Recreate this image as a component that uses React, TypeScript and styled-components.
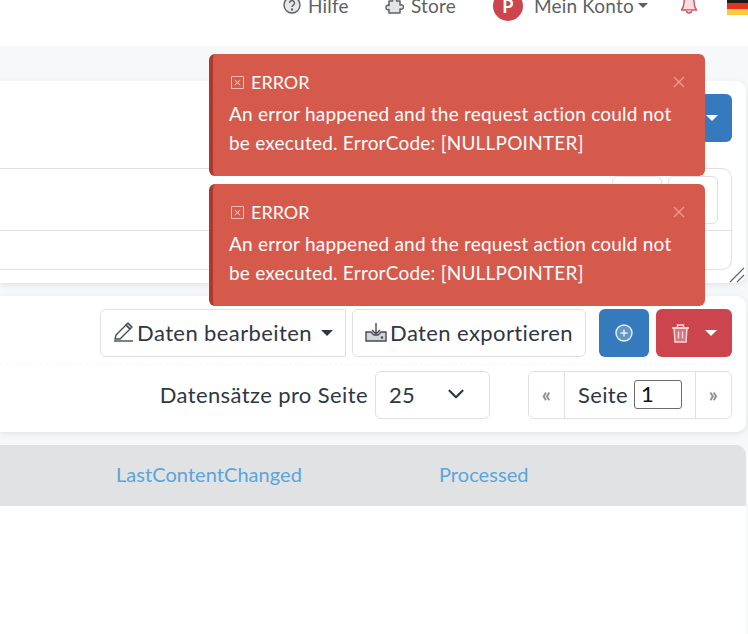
import styled, { createGlobalStyle } from 'styled-components';
import { BsXSquare } from 'react-icons/bs';
import { LuChevronDown } from 'react-icons/lu';

const FONT = '"Lato", "Noto Sans", sans-serif';
const TEXT = '#2f3742';
const BORDER = '#dfe0e4';

const GlobalStyle = createGlobalStyle`
  html, body {
    margin: 0;
    height: 100%;
    overflow: hidden;
    background: #fff;
    font-family: ${FONT};
    color: ${TEXT};
  }
`;

const Page = styled.div`
  width: 748px;
  height: 634px;
  position: relative;
  overflow: hidden;
`;

const TopBar = styled.header`
  height: 46px;
  background: #fff;
  overflow: hidden;
`;

const NavRow = styled.nav`
  display: flex;
  align-items: center;
  height: 30px;
  margin-top: -10px;
  padding-left: 283px;
  font-size: 19px;
  letter-spacing: 0.18px;
  color: #5d6165;
`;

const NavItem = styled.span<{ $width: number; $gap?: number }>`
  display: flex;
  align-items: center;
  gap: ${(p) => p.$gap ?? 7}px;
  width: ${(p) => p.$width}px;
  flex: none;
`;

const Avatar = styled.span`
  width: 30px;
  height: 30px;
  border-radius: 50%;
  background: #cb444e;
  color: #fff;
  font-weight: 700;
  font-size: 18px;
  display: flex;
  align-items: center;
  justify-content: center;
  margin: 2px 4px 0 0;
`;

const Caret = styled.span<{ $color?: string; $size?: number }>`
  display: inline-block;
  border-top: ${(p) => p.$size ?? 6}px solid ${(p) => p.$color || 'currentColor'};
  border-left: ${(p) => p.$size ?? 6}px solid transparent;
  border-right: ${(p) => p.$size ?? 6}px solid transparent;
`;

const NavCaret = styled(Caret)`
  margin-left: -3px;
`;

const Flag = styled.span`
  width: 28px;
  height: 18px;
  margin-top: 2px;
  flex: none;
  background: linear-gradient(#1a1a1a 0 33%, #e2331f 33% 66%, #f9c941 66%);
`;

const Content = styled.main`
  background: #f7f8fa;
  height: 588px;
  padding: 35px 2px 0 0;
  display: flex;
  flex-direction: column;
  gap: 13px;
  box-sizing: border-box;
`;

const Card = styled.section`
  background: #fff;
  border-radius: 0 10px 10px 0;
  box-shadow: 0 2px 6px rgba(40, 50, 70, 0.1);
  padding: 13px 14px 13px 0;
  position: relative;
`;

const FilterHead = styled.div`
  display: flex;
  justify-content: flex-end;
  margin-bottom: 26px;
`;

const SolidButton = styled.button<{ $bg: string; $width: number; $gap?: number }>`
  width: ${(p) => p.$width}px;
  height: 48px;
  border: 0;
  border-radius: 6px;
  background: ${(p) => p.$bg};
  color: #fff;
  display: flex;
  align-items: center;
  justify-content: center;
  gap: ${(p) => p.$gap ?? 0}px;
  padding: 0;
  flex: none;
`;

const BlueHead = styled(SolidButton)`
  justify-content: flex-end;
  padding-right: 14px;
`;

const AddButton = styled(SolidButton)`
  margin-right: 7px;
`;

const FilterTable = styled.div`
  border: 1px solid ${BORDER};
  border-left: 0;
  border-radius: 0 10px 10px 0;
`;

const FilterRow = styled.div`
  height: 61px;
  border-bottom: 1px solid ${BORDER};
  display: flex;
  justify-content: flex-end;
  align-items: center;
  gap: 6px;
  padding-right: 13px;
`;

const EmptyRow = styled.div`
  height: 38px;
`;

const SquareButton = styled.div`
  width: 48px;
  height: 46px;
  border: 1px solid ${BORDER};
  border-radius: 6px;
`;

const ResizeHandle = styled.svg`
  position: absolute;
  right: 0;
  bottom: 0;
`;

const ToolRow = styled.div`
  display: flex;
  justify-content: flex-end;
  align-items: center;
`;

const OutlineButton = styled.button<{ $width: number; $radius?: string; $after: number }>`
  width: ${(p) => p.$width}px;
  height: 48px;
  margin-right: ${(p) => p.$after}px;
  background: #fff;
  border: 1px solid ${BORDER};
  border-radius: ${(p) => p.$radius || '6px'};
  color: ${TEXT};
  font-family: ${FONT};
  font-size: 22px;
  letter-spacing: 0.4px;
  display: flex;
  align-items: center;
  justify-content: center;
  gap: 3px;
  padding: 0 0 2px;
  white-space: nowrap;
`;

const ButtonCaret = styled(Caret)`
  margin: 2px 0 0 6px;
`;

const Divider = styled.div`
  border-top: 1px dashed #f4f5f6;
  margin: 7px 0 6px;
`;

const PagerLabel = styled.span`
  font-size: 22px;
  letter-spacing: 0.4px;
  margin-right: 7px;
  padding-bottom: 2px;
`;

const PageSize = styled.div`
  width: 115px;
  height: 48px;
  box-sizing: border-box;
  border: 1px solid ${BORDER};
  border-radius: 6px;
  display: flex;
  align-items: center;
  justify-content: space-between;
  padding: 0 20px 2px 13px;
  font-size: 22px;
  letter-spacing: 0.35px;
  margin-right: 38px;
`;

const Pager = styled.div`
  display: flex;
  height: 48px;
  box-sizing: border-box;
  border: 1px solid ${BORDER};
  border-radius: 6px;
  font-size: 22px;
  letter-spacing: 0.35px;
`;

const PagerArrow = styled.span`
  width: 35px;
  display: flex;
  align-items: center;
  justify-content: center;
  color: #8a8d91;
  font-size: 20px;
  font-weight: 700;
  padding-bottom: 3px;
  box-sizing: border-box;
`;

const PagerCurrent = styled.span`
  width: 130px;
  border-left: 1px solid ${BORDER};
  border-right: 1px solid ${BORDER};
  display: flex;
  align-items: center;
  justify-content: center;
  gap: 6px;
  padding-bottom: 1px;
  box-sizing: content-box;
`;

const PageInput = styled.span`
  width: 46px;
  height: 27px;
  box-sizing: content-box;
  border: 1px solid #6b6b6b;
  border-radius: 3px;
  line-height: 26px;
  color: #111;
  text-indent: 6px;
`;

const TableHead = styled.div`
  height: 61px;
  background: #e1e2e4;
  border-radius: 0 10px 0 0;
  display: flex;
  align-items: center;
  padding: 0 0 4px 116px;
  box-sizing: border-box;
  font-size: 20px;
  letter-spacing: 0.05px;
  color: #5aa5d9;
`;

const HeadCell = styled.span<{ $width: number }>`
  width: ${(p) => p.$width}px;
`;

const TableBody = styled.div`
  flex: 1;
  margin-top: -13px;
  background: #fff;
`;

const ToastStack = styled.div`
  position: absolute;
  left: 209px;
  top: 54px;
  width: 496px;
  display: flex;
  flex-direction: column;
  gap: 8px;
`;

const Toast = styled.div`
  height: 122px;
  box-sizing: border-box;
  background: #d65a4c;
  border-left: 4px solid #ab3a2c;
  border-radius: 6px;
  color: #fff;
  padding: 15px 16px 0;
  position: relative;
`;

const ToastTitle = styled.div`
  display: flex;
  align-items: center;
  gap: 7px;
  font-size: 18px;
  line-height: 26px;
  margin: 0 0 4px 2px;
`;

const ToastText = styled.div`
  font-size: 19px;
  letter-spacing: 0.22px;
  line-height: 29px;
  margin-top: 3px;
`;

const CloseBox = styled.svg`
  position: absolute;
  right: 20px;
  top: 22px;
`;

const HelpIcon = () => (
  <svg width="18" height="18" viewBox="0 0 18 18" fill="none" stroke="#5d6165" strokeWidth="1.4">
    <circle cx="9" cy="9" r="8" fill="#e6e7e8" />
    <path d="M6.500 7a2.500 2.500 0 1 1 3.800 2.100C9.400 9.700 9 10.200 9 11" />
    <circle cx="9" cy="13.500" r=".5" />
  </svg>
);

const PuzzleIcon = () => (
  <svg width="19" height="19" viewBox="0 0 19 19" fill="#e3e4e5" stroke="#5d6165" strokeWidth="1.5" strokeLinejoin="round">
    <path d="M4 5h3.500C7 2 8 1 9.500 1S12 2 11.500 5H15v4c2.500-.5 3.500.5 3.500 2s-1 2.500-3.500 2v4H4v-3.500C1.500 14 1 13 1 11.500S1.500 9 4 9.500z" />
  </svg>
);

const BellIcon = () => (
  <svg width="18" height="20" viewBox="0 0 18 20" fill="#f8dcdf" stroke="#d2545d" strokeWidth="1.4" strokeLinejoin="round">
    <path d="M9 1.500c-3 0-5 2.500-5 5.500 0 4-1 6-2.500 8h15C15 13 14 11 14 7c0-3-2-5.500-5-5.500z" />
    <path d="M6.500 15.500a2.500 2.500 0 0 0 5 0" />
  </svg>
);

const PencilIcon = () => (
  <svg width="21" height="20" viewBox="0 0 21 20" fill="none" stroke="#444b54" strokeWidth="1.4" strokeLinejoin="round">
    <path d="M2 17l1-4L13 3l4 4L7 17z" />
    <path d="M13 3l2-2 4 4-2 2z" fill="#b9bcc0" />
    <path d="M1 19h19" />
  </svg>
);

const ExportIcon = () => (
  <svg width="22" height="20" viewBox="0 0 22 20" fill="none" stroke="#444b54" strokeWidth="1.4">
    <path d="M1 10h5l3 3h4l3-3h5v9H1z" fill="#d3d5d8" />
    <path d="M11 1v11M7 8l4 4 4-4" />
    <circle cx="17" cy="15.500" r=".6" fill="#444b54" />
  </svg>
);

const PlusCircleIcon = () => (
  <svg width="18" height="18" viewBox="0 0 18 18" fill="none" stroke="#eaf1f8" strokeWidth="1.4">
    <circle cx="9" cy="9" r="8" fill="rgba(255,255,255,.22)" />
    <path d="M9 5.500v7M5.500 9h7" />
  </svg>
);

const TrashIcon = () => (
  <svg width="17" height="19" viewBox="0 0 17 19" fill="none" stroke="#f5dcde" strokeWidth="1.4">
    <path d="M2 4l1 14h11l1-14z" fill="rgba(255,255,255,.25)" />
    <path d="M0 4h17M5.500 4V1h6v3M6.500 7.500v7M10.500 7.500v7" />
  </svg>
);

const ErrorToast = () => (
  <Toast>
    <ToastTitle>
      <BsXSquare size={13} color="#f6dcd9" />
      ERROR
    </ToastTitle>
    <ToastText>
      An error happened and the request action could not be executed. ErrorCode: [NULLPOINTER]
    </ToastText>
    <CloseBox width="12" height="12" viewBox="0 0 12 12" stroke="#ec9d94" strokeWidth="1.2">
      <path d="M1 1l10 10M11 1L1 11" />
    </CloseBox>
  </Toast>
);

const App = () => (
  <Page>
    <GlobalStyle />
    <TopBar>
      <NavRow>
        <NavItem $width={102}><HelpIcon />Hilfe</NavItem>
        <NavItem $width={108}><PuzzleIcon />Store</NavItem>
        <NavItem $width={187}><Avatar>P</Avatar>Mein Konto<NavCaret $size={5} /></NavItem>
        <NavItem $width={47}><BellIcon /></NavItem>
        <Flag />
      </NavRow>
    </TopBar>
    <Content>
      <Card>
        <FilterHead>
          <BlueHead $bg="#347abd" $width={90}><Caret $color="#fff" /></BlueHead>
        </FilterHead>
        <FilterTable>
          <FilterRow>
            <SquareButton />
            <SquareButton />
          </FilterRow>
          <EmptyRow />
        </FilterTable>
        <ResizeHandle width="17" height="17" viewBox="0 0 17 17" stroke="#666" strokeWidth="1.2">
          <path d="M1 16L15 2M8 16l7-7" />
        </ResizeHandle>
      </Card>
      <Card>
        <ToolRow>
          <OutlineButton $width={246} $after={6} $radius="6px 0 0 6px">
            <PencilIcon />Daten bearbeiten<ButtonCaret />
          </OutlineButton>
          <OutlineButton $width={234} $after={13}>
            <ExportIcon />Daten exportieren
          </OutlineButton>
          <AddButton $bg="#347abd" $width={50}>
            <PlusCircleIcon />
          </AddButton>
          <SolidButton $bg="#cb444e" $width={76} $gap={16}>
            <TrashIcon />
            <Caret $color="#fff" />
          </SolidButton>
        </ToolRow>
        <Divider />
        <ToolRow>
          <PagerLabel>Datensätze pro Seite</PagerLabel>
          <PageSize>25<LuChevronDown size={26} strokeWidth={2} /></PageSize>
          <Pager>
            <PagerArrow>«</PagerArrow>
            <PagerCurrent>Seite <PageInput>1</PageInput></PagerCurrent>
            <PagerArrow>»</PagerArrow>
          </Pager>
        </ToolRow>
      </Card>
      <div>
        <TableHead>
          <HeadCell $width={323}>LastContentChanged</HeadCell>
          <HeadCell $width={100}>Processed</HeadCell>
        </TableHead>
      </div>
      <TableBody />
    </Content>
    <ToastStack>
      <ErrorToast />
      <ErrorToast />
    </ToastStack>
  </Page>
);

export default App;
